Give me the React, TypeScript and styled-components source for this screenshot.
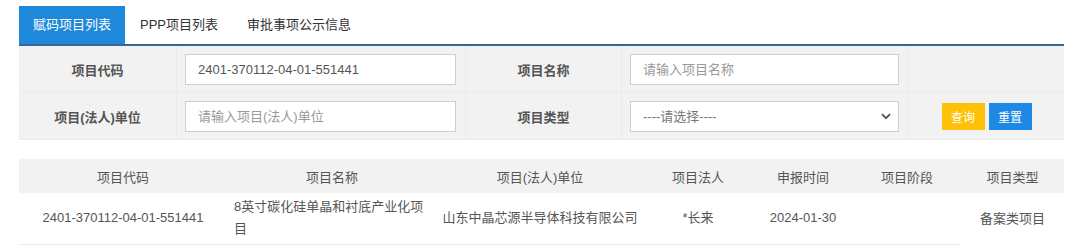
import styled, { createGlobalStyle } from 'styled-components';

const GlobalStyle = createGlobalStyle`
  html, body {
    margin: 0;
    padding: 0;
    background: #fff;
    font-family: "Liberation Sans", "Noto Sans CJK SC", sans-serif;
    font-size: 13px;
    color: #333;
  }
`;

const columns = [
  { title: '项目代码', width: 208 },
  { title: '项目名称', width: 210 },
  { title: '项目(法人)单位', width: 206 },
  { title: '项目法人', width: 110 },
  { title: '申报时间', width: 100 },
  { title: '项目阶段', width: 108 },
  { title: '项目类型', width: 103 },
];

const rows = [
  [
    '2401-370112-04-01-551441',
    '8英寸碳化硅单晶和衬底产业化项目',
    '山东中晶芯源半导体科技有限公司',
    '*长来',
    '2024-01-30',
    '',
    '备案类项目',
  ],
];

function App() {
  return (
    <Page>
      <GlobalStyle />
      <Tabs>
        <Tab $active>赋码项目列表</Tab>
        <Tab>PPP项目列表</Tab>
        <Tab>审批事项公示信息</Tab>
      </Tabs>

      <Form>
        <Label>项目代码</Label>
        <Field>
          <Input defaultValue="2401-370112-04-01-551441" />
        </Field>
        <Label>项目名称</Label>
        <Field>
          <Input placeholder="请输入项目名称" />
        </Field>
        <Blank />

        <Label>项目(法人)单位</Label>
        <Field>
          <Input placeholder="请输入项目(法人)单位" />
        </Field>
        <Label>项目类型</Label>
        <Field>
          <SelectWrap>
            <Select defaultValue="">
              <option value="">----请选择----</option>
            </Select>
            <Chevron width="10" height="7" viewBox="0 0 10 7">
              <path d="M1 1.2 L5 5.2 L9 1.2" fill="none" stroke="#555" strokeWidth="1.8" />
            </Chevron>
          </SelectWrap>
        </Field>
        <Actions>
          <Button $color="#ffc107">查询</Button>
          <Button $color="#1e88e5">重置</Button>
        </Actions>
      </Form>

      <Table>
        <colgroup>
          {columns.map((c) => (
            <col key={c.title} style={{ width: c.width }} />
          ))}
        </colgroup>
        <thead>
          <tr>
            {columns.map((c) => (
              <Th key={c.title}>{c.title}</Th>
            ))}
          </tr>
        </thead>
        <tbody>
          {rows.map((r, i) => (
            <tr key={i}>
              {r.map((cell, j) => (
                <Td key={j} $align={j === 1 ? 'left' : 'center'}>
                  {cell}
                </Td>
              ))}
            </tr>
          ))}
        </tbody>
      </Table>
    </Page>
  );
}

const Page = styled.div`
  width: 1045px;
  margin: 6px 0 0 19px;
`;

const Tabs = styled.div`
  display: flex;
  border-bottom: 2px solid #3b6594;
`;

const Tab = styled.div<{ $active?: boolean }>`
  height: 38px;
  line-height: 38px;
  padding: 0 14px 0 ${(p) => (p.$active ? '14px' : '15px')};
  font-size: 13px;
  color: ${(p) => (p.$active ? '#fff' : '#333')};
  background: ${(p) => (p.$active ? '#1e88db' : 'transparent')};
`;

const Form = styled.div`
  display: grid;
  grid-template-columns: 158px 289px 156px 287px 155px;
  grid-auto-rows: 47px;
  background: #f2f2f2;
`;

const Cell = styled.div`
  display: flex;
  align-items: center;
  border-right: 1px solid #ebebeb;
  border-bottom: 1px solid #ebebeb;
  box-sizing: border-box;
`;

const Label = styled(Cell)`
  justify-content: center;
  font-weight: bold;
  color: #555;
`;

const Field = styled(Cell)`
  padding: 0 9px 0 8px;
`;

const Blank = styled(Cell)`
  border-right: none;
`;

const Actions = styled(Cell)`
  justify-content: center;
  gap: 4px;
  border-right: none;
`;

const Input = styled.input`
  width: 100%;
  height: 31px;
  box-sizing: border-box;
  border: 1px solid #cfcfcf;
  background: #fff;
  padding: 0 12px;
  font-family: inherit;
  font-size: 13px;
  color: #555;
  outline: none;
  &::placeholder {
    color: #999;
  }
`;

const SelectWrap = styled.div`
  position: relative;
  width: 100%;
`;

const Select = styled.select`
  width: 100%;
  height: 31px;
  box-sizing: border-box;
  border: 1px solid #cfcfcf;
  background: #fff;
  padding: 0 12px;
  font-family: inherit;
  font-size: 13px;
  color: #777;
  appearance: none;
  outline: none;
`;

const Chevron = styled.svg`
  position: absolute;
  right: 8px;
  top: 12px;
  pointer-events: none;
`;

const Button = styled.button<{ $color: string }>`
  width: 43px;
  height: 27px;
  border: none;
  padding: 0;
  background: ${(p) => p.$color};
  color: #fff;
  font-family: inherit;
  font-size: 12px;
`;

const Table = styled.table`
  width: 1045px;
  margin-top: 19px;
  border-collapse: collapse;
  table-layout: fixed;
`;

const Th = styled.th`
  height: 34px;
  padding: 0;
  background: #f2f2f2;
  font-weight: normal;
  color: #555;
  font-size: 13px;
  text-align: center;
`;

const Td = styled.td<{ $align: string }>`
  height: 51px;
  padding: 2px 4px 2px ${(p) => (p.$align === 'left' ? '7px' : '4px')};
  box-sizing: border-box;
  text-align: ${(p) => p.$align};
  color: #555;
  font-size: 13px;
  line-height: 22px;
  border-bottom: 1px solid #ebebeb;
  &:last-child {
    border-bottom: none;
  }
`;

export default App;
